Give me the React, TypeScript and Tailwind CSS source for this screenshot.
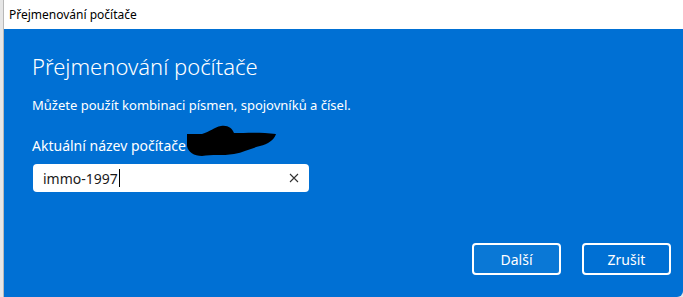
import React from "react";

export default function App() {
  return (
    <div className="w-[683px] h-[297px] bg-[#e6e6e6] relative overflow-hidden" style={{ fontFamily: '"Noto Sans", "Open Sans", sans-serif' }}>
      <div className="absolute left-[3px] top-0 w-[680px] h-[297px] flex flex-col rounded-br-[6px] overflow-hidden border-l border-[#b8b8b8]">
        <div className="h-[29px] bg-white flex items-center pl-[5px] text-[12px] text-black shrink-0">
          Přejmenování počítače
        </div>
        <div className="flex-1 bg-[#0070d4] text-white relative pl-[28px] pr-[12px]">
          <div className="mt-[22px] text-[22px] font-light leading-[30px]">Přejmenování počítače</div>
          <div className="mt-[14px] text-[13px] leading-[20px]">Můžete použít kombinaci písmen, spojovníků a čísel.</div>
          <div className="mt-[21px] text-[14px] leading-[20px] relative">
            Aktuální název počítače
            <svg className="absolute left-[154px] top-[-12px]" width="92" height="35" viewBox="0 0 92 35">
              <path d="M1 10 L16 10 C24 8 28 3 35 2 C42 1 46 4 48 9 C60 9 75 8 90 10 C88 16 82 20 74 22 C66 24 58 28 48 30 C36 32 26 30 16 32 C8 32 2 28 1 22 Z" fill="#000" />
            </svg>
          </div>
          <div className="mt-[8px] w-[276px] h-[28px] bg-white rounded-[4px] flex items-center pl-[10px] pr-[10px] text-[14px] text-[#1a1a1a] ml-[1px]">
            <span>immo-1997</span>
            <span className="inline-block w-[1px] h-[18px] bg-black ml-[1px]" />
            <span className="ml-auto">
              <svg width="10" height="10" viewBox="0 0 10 10">
                <path d="M1 1 L9 9 M9 1 L1 9" stroke="#333" strokeWidth="1.1" />
              </svg>
            </span>
          </div>
          <div className="absolute right-[12px] bottom-[22px] flex gap-[21px]">
            <button className="w-[89px] h-[32px] border-2 border-white rounded-[4px] bg-[#0a78d6] text-[14px] text-white">Další</button>
            <button className="w-[89px] h-[32px] border-2 border-white rounded-[4px] bg-[#0070d4] text-[14px] text-white">Zrušit</button>
          </div>
        </div>
      </div>
    </div>
  );
}
